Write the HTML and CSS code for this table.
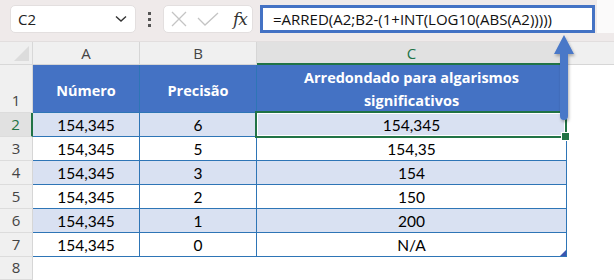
FILE: index.html
```html
<!DOCTYPE html>
<html lang="pt">
<head>
<meta charset="utf-8">
<link rel="stylesheet" href="styles.css">
</head>
<body>
<div class="toolbar">
  <div class="namebox">
    <span class="nb-text">C2</span>
    <svg class="chev" width="12" height="8" viewBox="0 0 12 8"><path d="M1 1.5 L6 6 L11 1.5" fill="none" stroke="#333" stroke-width="1.4"/></svg>
  </div>
  <div class="dots"><i></i><i></i><i></i></div>
  <div class="fxbox">
    <svg width="16" height="16" viewBox="0 0 16 16"><path d="M1 1 L15 15 M15 1 L1 15" stroke="#c4c4c4" stroke-width="1.3" fill="none"/></svg>
    <svg width="22" height="14" viewBox="0 0 22 14"><path d="M1 6 L8 13 L21 1" stroke="#c4c4c4" stroke-width="1.3" fill="none"/></svg>
    <span class="fx">fx</span>
  </div>
  <div class="formula">=ARRED(A2;B2-(1+INT(LOG10(ABS(A2)))))</div>
  <div class="expand"></div>
</div>
<div class="sheet">
  <div class="corner"><span class="tri"></span></div>
  <div class="colh">A</div>
  <div class="colh">B</div>
  <div class="colh sel">C</div>
  <div class="colh rest"></div>

  <div class="rowh">1</div>
  <div class="c hd">Número</div>
  <div class="c hd">Precisão</div>
  <div class="c hd wrap">Arredondado para algarismos<br>significativos</div>
  <div class="blank"></div>

  <div class="rowh sel">2</div>
  <div class="c band">154,345</div>
  <div class="c band">6</div>
  <div class="c band active">154,345</div>
  <div class="blank"></div>

  <div class="rowh">3</div>
  <div class="c">154,345</div>
  <div class="c">5</div>
  <div class="c">154,35</div>
  <div class="blank"></div>

  <div class="rowh">4</div>
  <div class="c band">154,345</div>
  <div class="c band">3</div>
  <div class="c band">154</div>
  <div class="blank"></div>

  <div class="rowh">5</div>
  <div class="c">154,345</div>
  <div class="c">2</div>
  <div class="c">150</div>
  <div class="blank"></div>

  <div class="rowh">6</div>
  <div class="c band">154,345</div>
  <div class="c band">1</div>
  <div class="c band">200</div>
  <div class="blank"></div>

  <div class="rowh">7</div>
  <div class="c">154,345</div>
  <div class="c">0</div>
  <div class="c last">N/A</div>
  <div class="blank"></div>

  <div class="rowh">8</div>
  <div class="blank"></div>
  <div class="blank"></div>
  <div class="blank"></div>
  <div class="blank"></div>
</div>
<svg class="arrow" width="30" height="96" viewBox="0 0 30 96">
  <defs>
    <filter id="sh" x="-50%" y="-20%" width="200%" height="140%">
      <feDropShadow dx="1" dy="2" stdDeviation="1.5" flood-color="#000" flood-opacity="0.3"/>
    </filter>
  </defs>
  <g filter="url(#sh)">
    <path d="M12 3 L2 22 L8 22 L8 84 Q8 88 12 88 Q16 88 16 84 L16 22 L22 22 Z" fill="#4a78c8"/>
  </g>
</svg>
</body>
</html>
```
FILE: styles.css
```css
* { box-sizing: border-box; }
html, body { margin: 0; padding: 0; }
body {
  width: 614px;
  height: 280px;
  overflow: hidden;
  background: #ffffff;
  font-family: "Lato", "Liberation Sans", sans-serif;
  position: relative;
}
.toolbar {
  height: 42px;
  background: #efeaea;
  border-bottom: 1px solid #e2dede;
  display: flex;
  align-items: flex-start;
  padding: 5px 0 0 10px;
}
.namebox {
  width: 126px;
  height: 28px;
  background: #fff;
  border: 1px solid #e3dfdf;
  border-radius: 5px;
  display: flex;
  align-items: center;
  justify-content: space-between;
  padding: 0 8px 0 7px;
  font-family: "Open Sans", "Noto Sans", sans-serif;
  font-size: 15px;
  color: #222;
}
.dots {
  width: 27px;
  height: 28px;
  display: flex;
  flex-direction: column;
  align-items: center;
  justify-content: center;
  gap: 3px;
}
.dots i {
  display: block;
  width: 3px;
  height: 3px;
  background: #555;
}
.fxbox {
  width: 90px;
  height: 28px;
  background: #fff;
  border: 1px solid #e3dfdf;
  border-radius: 5px;
  display: flex;
  align-items: center;
  padding: 0 0 0 7px;
  gap: 10px;
}
.fx {
  font-family: "DejaVu Serif", "Liberation Serif", serif;
  font-style: italic;
  font-size: 17px;
  color: #333;
  margin-left: 4px;
  letter-spacing: -1px;
}
.formula {
  margin-left: 7px;
  width: 335px;
  height: 28px;
  border: 3px solid #4472c4;
  background: #fff;
  font-family: "Open Sans", "Noto Sans", sans-serif;
  font-size: 15px;
  color: #111;
  display: flex;
  align-items: center;
  padding-left: 10px;
  white-space: nowrap;
  letter-spacing: 0;
}
.expand {
  margin-top: -5px;
  margin-left: 2px;
  width: 17px;
  height: 33px;
  background: #fbfafa;
}
.sheet {
  display: grid;
  grid-template-columns: 33px 107px 117px 310px 1fr;
  grid-template-rows: 23px 48px repeat(6, 24px) 23px;
}
.corner {
  background: #efefef;
  border-right: 1px solid #d8d8d8;
  border-bottom: 1px solid #d8d8d8;
  position: relative;
}
.corner .tri {
  position: absolute;
  right: 3px;
  bottom: 3px;
  width: 0;
  height: 0;
  border-left: 15px solid transparent;
  border-bottom: 15px solid #dcdcdc;
}
.colh {
  background: #f0f0f0;
  border-right: 1px solid #d6d6d6;
  border-bottom: 1px solid #d6d6d6;
  display: flex;
  align-items: center;
  justify-content: center;
  font-family: "Open Sans", "Noto Sans", sans-serif;
  font-size: 15px;
  color: #444;
}
.colh.sel {
  background: #e1e1e1;
  color: #217346;
  border-bottom: 2px solid #217346;
}
.colh.rest { border-right: none; }
.rowh {
  background: #f0f0f0;
  border-right: 1px solid #d6d6d6;
  border-bottom: 1px solid #dcdcdc;
  display: flex;
  align-items: flex-end;
  justify-content: center;
  padding-bottom: 1px;
  font-family: "Open Sans", "Noto Sans", sans-serif;
  font-size: 15px;
  line-height: 21px;
  color: #444;
}
.rowh.sel {
  background: #e1e1e1;
  color: #217346;
  border-right: 2px solid #217346;
}
.c {
  border-right: 1px solid #2e75b6;
  border-bottom: 1px solid #2e75b6;
  display: flex;
  align-items: center;
  justify-content: center;
  font-size: 15.5px;
  color: #000;
  text-align: center;
  padding-top: 1px;
}
.c.band { background: #d9e1f2; }
.c.hd {
  background: #4472c4;
  color: #fff;
  font-family: "Open Sans", "Noto Sans", sans-serif;
  font-weight: 700;
  font-size: 14.5px;
  padding-top: 4px;
}
.c.wrap { line-height: 23px; padding-top: 0; }
.c.active { position: relative; }
.c.active::after {
  content: "";
  position: absolute;
  left: -2px;
  top: -2px;
  right: -1px;
  bottom: -2px;
  border: 2px solid #217346;
  box-shadow: inset 0 0 0 1px #fff;
}
.c.active::before {
  content: "";
  position: absolute;
  right: -4px;
  bottom: -5px;
  width: 7px;
  height: 7px;
  background: #217346;
  border: 1px solid #fff;
  z-index: 2;
}
.c.last { position: relative; }
.c.last::after {
  content: "";
  position: absolute;
  right: 0;
  bottom: 0;
  width: 0;
  height: 0;
  border-left: 6px solid transparent;
  border-bottom: 6px solid #3a55b0;
}
.blank { background: #fff; }
.arrow {
  position: absolute;
  left: 552px;
  top: 32px;
}
```
